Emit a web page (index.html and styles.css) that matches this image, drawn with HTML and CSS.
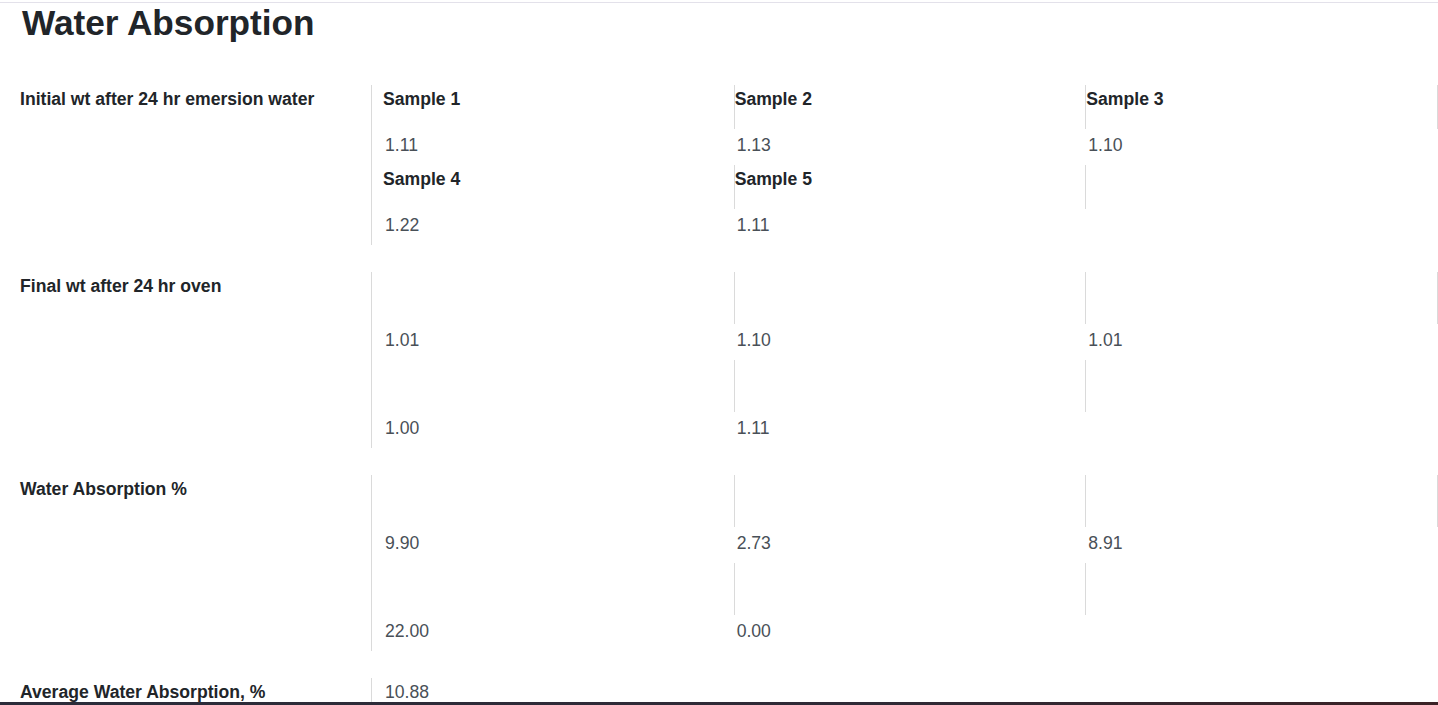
FILE: index.html
```html
<!DOCTYPE html>
<html lang="en">

<head>
    <meta charset="UTF-8" />
    <meta name="viewport" content="width=device-width, initial-scale=1.0" />
    <title>Water Absorption</title>
    <link rel="stylesheet" href="styles.css">
</head>

<body>
    <div class="top-rule"></div>
    <h1 class="page-title">Water Absorption</h1>

    <div class="result-group">
        <div class="group-label">Initial wt after 24 hr emersion water</div>
        <div class="group-values">
            <div class="cell">
                <div class="cell-head">Sample 1</div>
                <div class="cell-value">1.11</div>
            </div>
            <div class="cell">
                <div class="cell-head">Sample 2</div>
                <div class="cell-value">1.13</div>
            </div>
            <div class="cell">
                <div class="cell-head">Sample 3</div>
                <div class="cell-value">1.10</div>
            </div>
            <div class="cell">
                <div class="cell-head">Sample 4</div>
                <div class="cell-value">1.22</div>
            </div>
            <div class="cell">
                <div class="cell-head">Sample 5</div>
                <div class="cell-value">1.11</div>
            </div>
        </div>
    </div>

    <div class="result-group">
        <div class="group-label">Final wt after 24 hr oven</div>
        <div class="group-values">
            <div class="cell">
                <div class="cell-head empty"></div>
                <div class="cell-value">1.01</div>
            </div>
            <div class="cell">
                <div class="cell-head empty"></div>
                <div class="cell-value">1.10</div>
            </div>
            <div class="cell">
                <div class="cell-head empty"></div>
                <div class="cell-value">1.01</div>
            </div>
            <div class="cell">
                <div class="cell-head empty"></div>
                <div class="cell-value">1.00</div>
            </div>
            <div class="cell">
                <div class="cell-head empty"></div>
                <div class="cell-value">1.11</div>
            </div>
        </div>
    </div>

    <div class="result-group">
        <div class="group-label">Water Absorption %</div>
        <div class="group-values">
            <div class="cell">
                <div class="cell-head empty"></div>
                <div class="cell-value">9.90</div>
            </div>
            <div class="cell">
                <div class="cell-head empty"></div>
                <div class="cell-value">2.73</div>
            </div>
            <div class="cell">
                <div class="cell-head empty"></div>
                <div class="cell-value">8.91</div>
            </div>
            <div class="cell">
                <div class="cell-head empty"></div>
                <div class="cell-value">22.00</div>
            </div>
            <div class="cell">
                <div class="cell-head empty"></div>
                <div class="cell-value">0.00</div>
            </div>
        </div>
    </div>

    <div class="result-group last">
        <div class="group-label">Average Water Absorption, %</div>
        <div class="group-values">
            <div class="cell">
                <div class="cell-value total">10.88</div>
            </div>
        </div>
    </div>

    <div class="window-edge"></div>
</body>

</html>
```

FILE: styles.css
```css
* {
    box-sizing: border-box;
}

body {
    margin: 0;
    padding: 0;
    font-family: "Liberation Sans", Arial, Helvetica, sans-serif;
    font-size: 17.6px;
    line-height: 26.4px;
    color: #212529;
    background: #fff;
    overflow: hidden;
}

.top-rule {
    margin-top: 2px;
    border-top: 1px solid #e3e1ea;
}

.page-title {
    margin: 1px 0 43px;
    padding-left: 22px;
    font-size: 35.2px;
    line-height: 38px;
    font-weight: bold;
}

.result-group {
    display: flex;
    margin-bottom: 27px;
}

.group-label {
    width: 372px;
    flex-shrink: 0;
    padding: 1px 0 0 20px;
    border-right: 1px solid #dadada;
    font-weight: bold;
}

.group-values {
    flex: 1;
    padding-left: 11px;
    display: grid;
    grid-template-columns: repeat(3, 1fr);
}

.cell-head {
    height: 44px;
    padding-top: 1px;
    border-right: 1px solid #dadada;
    font-weight: bold;
}

.cell-head.empty {
    height: 52px;
}

.cell-value {
    height: 36px;
    padding: 3px 0 0 2px;
    color: #495057;
}

.cell-value.total {
    padding-top: 1px;
    height: 27px;
}

.window-edge {
    position: fixed;
    left: 0;
    right: 0;
    bottom: 0;
    height: 3px;
    background: linear-gradient(to right, #2b2c3a, #2f2a36 60%, #3b2226);
}
```
